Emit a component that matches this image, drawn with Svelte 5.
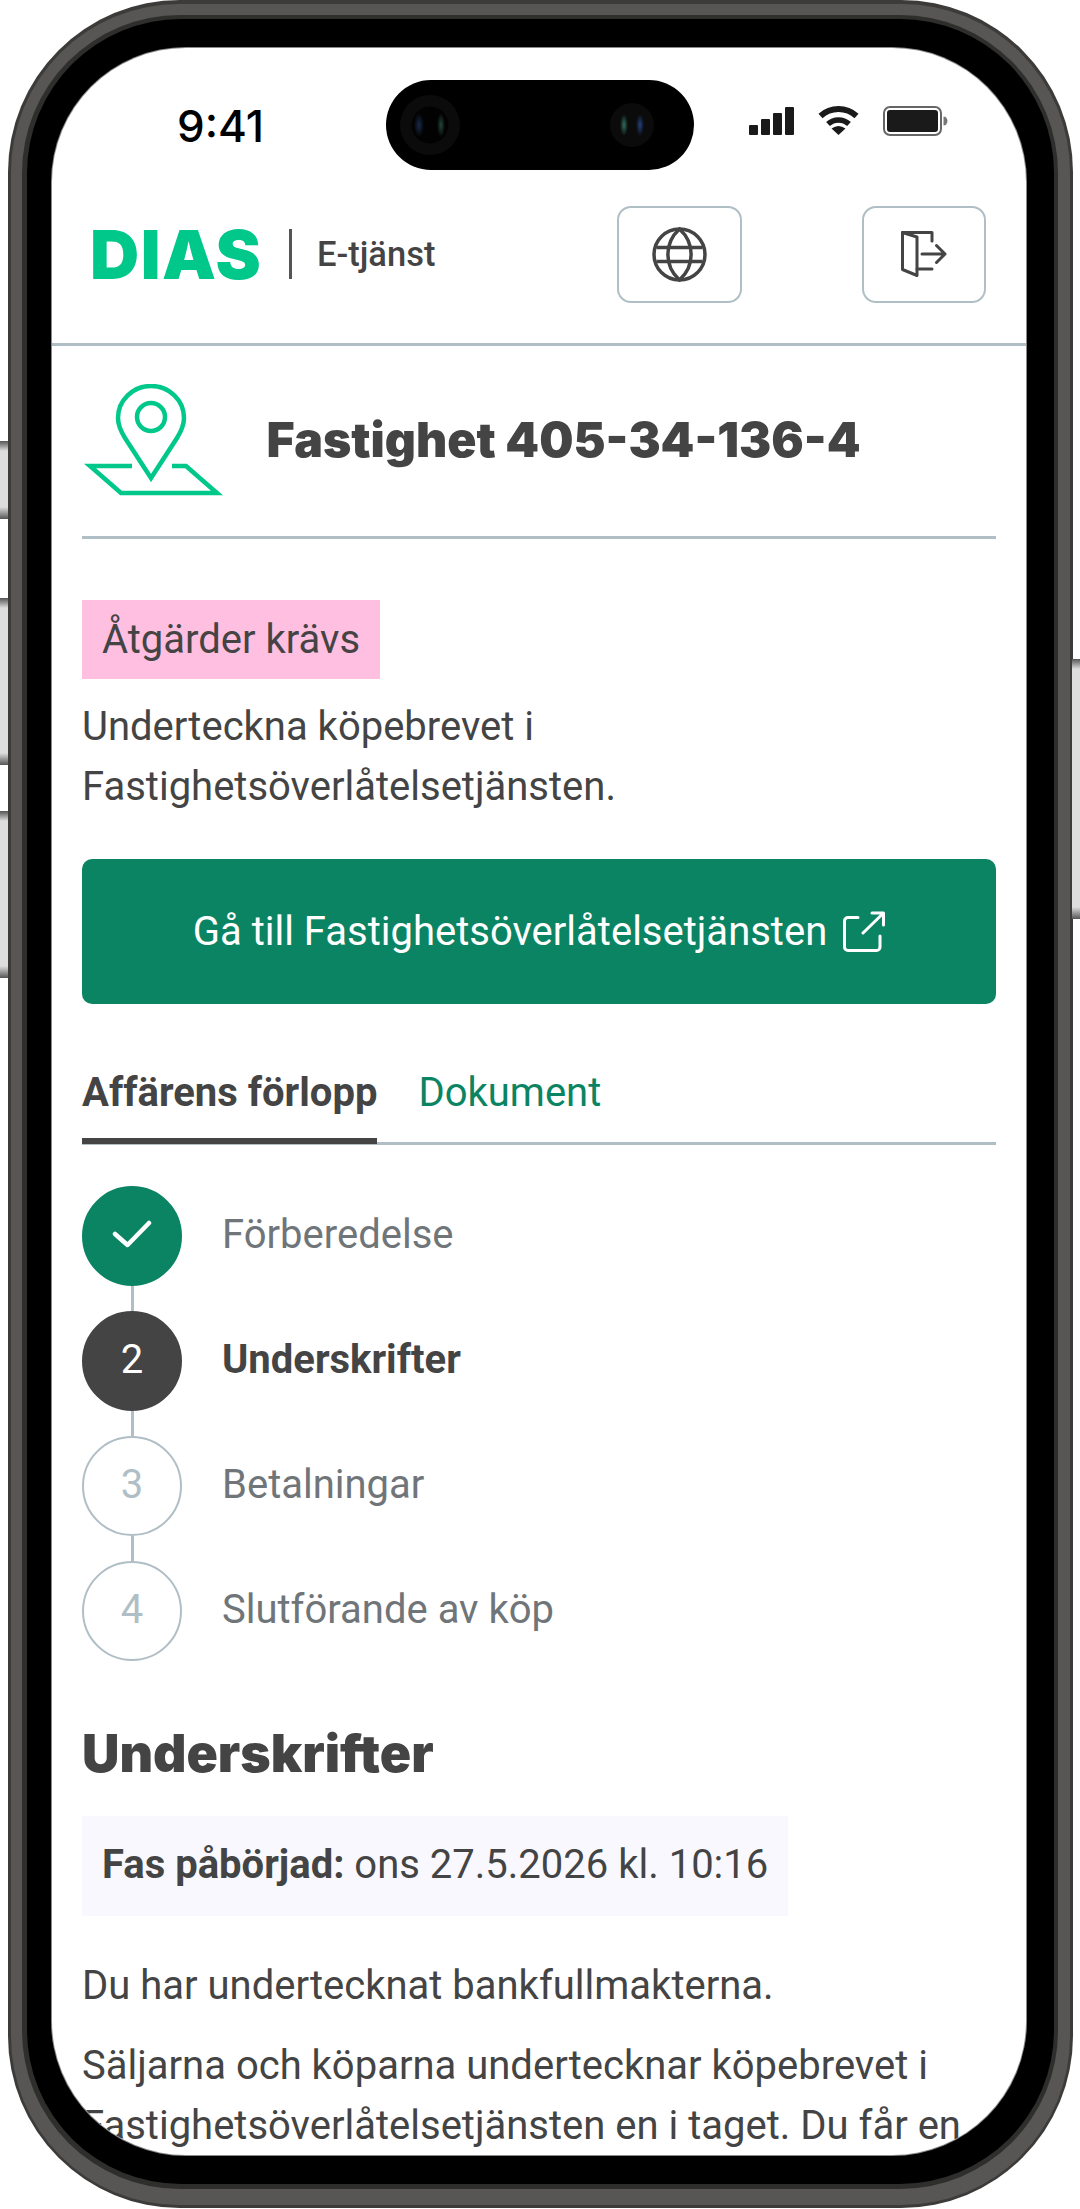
<script lang="ts">
  const steps = [
    { label: "Förberedelse", state: "done" },
    { label: "Underskrifter", state: "active", num: 2 },
    { label: "Betalningar", state: "todo", num: 3 },
    { label: "Slutförande av köp", state: "todo", num: 4 },
  ];
</script>

<div class="stage">
  <div class="hw hw-mute"></div>
  <div class="hw hw-up"></div>
  <div class="hw hw-down"></div>
  <div class="hw hw-power"></div>

  <div class="phone">
    <div class="band">
      <div class="groove">
        <div class="bezel">
          <div class="screen">
            <div class="island">
              <span class="lens lens-left"></span>
              <span class="lens lens-right"></span>
            </div>

            <div class="status">
              <span class="time">9:41</span>
              <div class="status-icons">
                <svg class="signal" viewBox="0 0 45 28" fill="#1a1a1a">
                  <rect x="0" y="18" width="9" height="10" rx="1" />
                  <rect x="12" y="12" width="9" height="16" rx="1" />
                  <rect x="24" y="6" width="9" height="22" rx="1" />
                  <rect x="36" y="0" width="9" height="28" rx="1" />
                </svg>
                <svg class="wifi" viewBox="0 0 43 31">
                  <path d="M3.5 12 A27 27 0 0 1 39.5 12" fill="none" stroke="#1a1a1a" stroke-width="6" />
                  <path d="M11 20 A15.5 15.5 0 0 1 32 20" fill="none" stroke="#1a1a1a" stroke-width="5.5" />
                  <path d="M21.5 31 L14.5 24.5 Q21.5 19.5 28.5 24.5 Z" fill="#1a1a1a" />
                </svg>
                <svg class="battery" viewBox="0 0 65 30">
                  <rect x="1" y="1" width="57" height="28" rx="6" fill="none" stroke="#666" stroke-width="2" />
                  <rect x="4" y="4" width="51" height="22" rx="3" fill="#1a1a1a" />
                  <path d="M60.5 10.5 a4 4.5 0 0 1 0 9 Z" fill="#777" />
                </svg>
              </div>
            </div>

            <header class="topbar">
              <span class="logo">DIAS</span>
              <span class="logo-sep"></span>
              <span class="service">E-tjänst</span>
              <button class="icon-btn globe-btn" aria-label="Språk">
                <svg width="55" height="55" viewBox="0 0 55 55" fill="none" stroke="#444" stroke-width="3.5">
                  <circle cx="27.5" cy="27.5" r="25.5" />
                  <path d="M27.5 2 C12 16 12 39 27.5 53 C43 39 43 16 27.5 2 Z" />
                  <path d="M4.5 20.5 H50.5 M4.5 34.5 H50.5" />
                </svg>
              </button>
              <button class="icon-btn" aria-label="Logga ut">
                <svg width="46" height="46" viewBox="0 0 46 46" fill="none" stroke="#444" stroke-width="3" stroke-linecap="round" stroke-linejoin="round">
                  <path d="M1.5 1.5 V38.5 L16 44.5 V6 Z" />
                  <path d="M1.5 1.5 H31 V10" />
                  <path d="M16 38 H31" />
                  <path d="M21 23 H44 M35.5 14.5 L44 23 L35.5 31.5" />
                </svg>
              </button>
            </header>

            <main class="content">
              <div class="title-row">
                <svg class="pin" width="140" height="114" viewBox="0 0 140 114" fill="none" stroke="#00c78a" stroke-width="4.5">
                  <path d="M67 94 L41 54 C36 46 34 41 34 34 A33 32 0 0 1 100 34 C100 41 98 46 93 54 Z" />
                  <circle cx="67" cy="33" r="14" />
                  <path d="M48 82 H6 L37 109 H133 L102 82 H88" />
                </svg>
                <h1>Fastighet 405-34-136-4</h1>
              </div>

              <div class="badge">Åtgärder krävs</div>
              <p class="notice">Underteckna köpebrevet i<br />Fastighetsöverlåtelsetjänsten.</p>

              <button class="cta">
                <span>Gå till Fastighetsöverlåtelsetjänsten</span>
                <svg width="42" height="42" viewBox="0 0 42 42" fill="none" stroke="#fff" stroke-width="3" stroke-linecap="round" stroke-linejoin="round">
                  <path d="M15 6.5 H5 A3.5 3.5 0 0 0 1.5 10 V36 A3.5 3.5 0 0 0 5 39.5 H33.5 A3.5 3.5 0 0 0 37 36 V25" />
                  <path d="M20 22 L40 2.5 M29 2 H40.5 V14" />
                </svg>
              </button>

              <nav class="tabs">
                <span class="tab tab-active">Affärens förlopp</span>
                <span class="tab">Dokument</span>
              </nav>

              <ol class="steps">
                {#each steps as step, i}
                  {#if i > 0}<li class="link" aria-hidden="true"></li>{/if}
                  <li class="step {step.state}">
                    <span class="dot">
                      {#if step.state === "done"}
                        <svg width="40" height="30" viewBox="0 0 40 30" fill="none" stroke="#fff" stroke-width="4.5" stroke-linecap="round" stroke-linejoin="round">
                          <path d="M3 14 L15.5 25 L37 3" />
                        </svg>
                      {:else}
                        {step.num}
                      {/if}
                    </span>
                    <span class="step-label">{step.label}</span>
                  </li>
                {/each}
              </ol>

              <h2>Underskrifter</h2>
              <div class="phase"><b>Fas påbörjad:</b> ons 27.5.2026 kl. 10:16</div>
              <p class="body-p">Du har undertecknat bankfullmakterna.</p>
              <p class="body-p second">Säljarna och köparna undertecknar köpebrevet i Fastighetsöverlåtelsetjänsten en i taget. Du får en</p>
            </main>
          </div>
        </div>
      </div>
    </div>
  </div>
</div>

<style>
  :global(body) {
    margin: 0;
    background: #fff;
  }

  .stage {
    position: relative;
    width: 1080px;
    height: 2209px;
    overflow: hidden;
    background: #fff;
    font-family: Roboto, "Liberation Sans", sans-serif;
    color: #444;
  }

  .hw {
    position: absolute;
    width: 8px;
    background: linear-gradient(180deg, #555 0, #ddd 10px, #ddd calc(100% - 12px), #555 100%);
  }

  .hw-mute { left: 0; top: 441px; height: 78px; }
  .hw-up { left: 0; top: 598px; height: 167px; }
  .hw-down { left: 0; top: 811px; height: 167px; }
  .hw-power { right: 0; top: 659px; height: 260px; }

  .phone {
    box-sizing: border-box;
    margin-left: 7.5px;
    width: 1065.5px;
    height: 2208px;
    padding: 3.5px;
    border-radius: 172px;
    background: #3c3b39;
  }

  .band {
    box-sizing: border-box;
    height: 100%;
    padding: 11px 11.5px 16px 11px;
    border-radius: 168px;
    background: #575654;
  }

  .groove {
    box-sizing: border-box;
    height: 100%;
    padding: 4.5px;
    border-radius: 158px;
    background: #2e2e2d;
  }

  .bezel {
    box-sizing: border-box;
    height: 100%;
    padding: 29px 27.5px 29px 25.5px;
    border-radius: 154px;
    background: #000;
  }

  .screen {
    position: relative;
    height: 100%;
    overflow: hidden;
    border-radius: 134px;
    background: #fff;
    box-shadow: 0 0 0 1px #8a8a8a;
  }

  .island {
    position: absolute;
    left: 333.5px;
    top: 31.5px;
    width: 308px;
    height: 90px;
    border-radius: 45px;
    background: #000;
  }

  .lens {
    position: absolute;
    border-radius: 50%;
  }

  .lens-left {
    left: 14px;
    top: 15px;
    width: 60px;
    height: 60px;
    background:
      radial-gradient(ellipse 5px 12px at 19px 30px, #1a2a4a, transparent),
      radial-gradient(ellipse 4px 12px at 41px 30px, #24463c, transparent),
      radial-gradient(circle at 30px 30px, #020202 18px, #0b0b0b 19px);
  }

  .lens-right {
    left: 224px;
    top: 23px;
    width: 44px;
    height: 44px;
    background:
      radial-gradient(ellipse 4px 11px at 14px 22px, #2f6d5c, transparent),
      radial-gradient(ellipse 4px 11px at 30px 22px, #24407e, transparent),
      #0b0b0b;
  }

  .status {
    box-sizing: border-box;
    display: flex;
    justify-content: space-between;
    height: 118px;
    padding: 56px 78px 0 125px;
  }

  .time {
    font-family: Inter, sans-serif;
    font-size: 44px;
    font-weight: 500;
    line-height: 44px;
    color: #000;
  }

  .status-icons {
    display: flex;
    align-items: flex-start;
    gap: 23px;
    height: 32px;
  }

  .signal { width: 45px; height: 28px; margin-top: 2.5px; }
  .wifi { width: 43px; height: 31px; }
  .battery { width: 65px; height: 30px; margin-top: 1.5px; }

  .topbar {
    box-sizing: border-box;
    display: flex;
    align-items: center;
    height: 179.5px;
    padding: 0 40px;
    border-bottom: 3px solid #b0bec5;
  }

  .logo {
    width: 170px;
    margin-left: -2px;
    font-family: Inter, sans-serif;
    font-size: 68px;
    font-weight: 900;
    line-height: 50px;
    letter-spacing: 1.5px;
    color: #00c78a;
  }

  .logo-sep {
    width: 3px;
    height: 50px;
    margin: 0 25px 0 29px;
    background: #555;
  }

  .service {
    flex: 1;
    font-size: 34.5px;
    font-weight: 500;
    color: #444;
  }

  .icon-btn {
    box-sizing: border-box;
    display: flex;
    align-items: center;
    justify-content: center;
    width: 124.5px;
    height: 97px;
    padding: 0;
    border: 2.5px solid #b0bec5;
    border-radius: 14px;
    background: #fff;
  }

  .globe-btn { margin-right: 120px; }

  .content {
    padding: 0 30px;
  }

  .title-row {
    box-sizing: border-box;
    display: flex;
    align-items: center;
    gap: 43px;
    height: 193.5px;
    padding: 0 0 0 1.5px;
    border-bottom: 3px solid #b0bec5;
  }

  h1, h2 {
    margin: 0;
    font-family: Inter, sans-serif;
    font-weight: 900;
    color: #444;
  }

  h1 {
    font-size: 48.2px;
    line-height: 60px;
    margin-top: -2px;
  }

  .badge {
    width: fit-content;
    margin-top: 61px;
    padding: 0 20px;
    height: 79px;
    line-height: 79px;
    font-size: 40px;
    background: #ffbfe0;
  }

  p {
    margin: 0;
    font-size: 40px;
    line-height: 60px;
  }

  .notice {
    margin-top: 18px;
  }

  .cta {
    box-sizing: border-box;
    display: flex;
    align-items: center;
    justify-content: center;
    gap: 16px;
    width: 100%;
    height: 145px;
    margin-top: 42px;
    padding: 0;
    border: none;
    border-radius: 10px;
    background: #0b8463;
    color: #fff;
    font-family: Roboto, sans-serif;
    font-size: 40px;
  }

  .tabs {
    display: flex;
    gap: 41px;
    height: 141px;
    box-sizing: border-box;
    align-items: flex-end;
    border-bottom: 3px solid #b0bec5;
  }

  .tab {
    font-size: 40px;
    line-height: 60px;
    padding-bottom: 19px;
    color: #0b8463;
  }

  .tab-active {
    font-weight: 700;
    color: #444;
    border-bottom: 6px solid #444;
    margin-bottom: -2px;
    padding-bottom: 15px;
  }

  .steps {
    list-style: none;
    margin: 41px 0 0;
    padding: 0;
  }

  .step {
    display: flex;
    align-items: center;
    gap: 40px;
    height: 100px;
    font-size: 40px;
    color: #6f7579;
  }

  .step-label {
    margin-top: -3px;
  }

  .link {
    width: 3px;
    height: 25px;
    margin-left: 49px;
    background: #b0bec5;
  }

  .dot {
    box-sizing: border-box;
    display: flex;
    align-items: center;
    justify-content: center;
    width: 100px;
    height: 100px;
    padding-bottom: 3px;
    border-radius: 50%;
    color: #b0bec5;
    border: 2.5px solid #b0bec5;
  }

  .done .dot { background: #0b8463; border-color: #0b8463; }
  .active .dot { background: #444; border-color: #444; color: #fff; }
  .active .step-label { font-weight: 700; color: #444; }

  h2 {
    margin-top: 62px;
    font-size: 51.8px;
    line-height: 60px;
  }

  .phase {
    width: fit-content;
    margin-top: 33px;
    padding: 0 20px;
    height: 100px;
    line-height: 98px;
    font-size: 40px;
    background: #f8f8fe;
  }

  .phase b { font-weight: 700; }

  .body-p { margin-top: 40px; }
  .body-p.second { margin-top: 20px; }
</style>
